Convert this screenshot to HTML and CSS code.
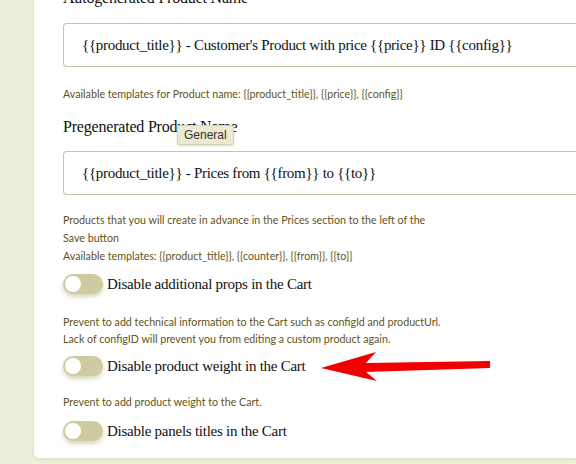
FILE: index.html
```html
<!DOCTYPE html>
<html lang="en">
<head>
  <meta charset="UTF-8" />
  <meta name="viewport" content="width=device-width, initial-scale=1.0"/>
  <title>Product Settings</title>
  <link rel="stylesheet" href="styles.css">
</head>
<body>
  <div class="card">
    <!-- Autogenerated name -->
    <div class="field-label">Autogenerated Product Name</div>
    <div class="text-input">{{product_title}} - Customer's Product with price {{price}} ID {{config}}</div>
    <p class="help help-1">Available templates for Product name: {{product_title}}, {{price}}, {{config}}</p>

    <!-- Pregenerated name -->
    <div class="field-label label-2">Pregenerated Product Name</div>
    <div class="text-input input-2">{{product_title}} - Prices from {{from}} to {{to}}</div>
    <p class="help help-2">Products that you will create in advance in the Prices section to the left of the<br>Save button<br>Available templates: {{product_title}}, {{counter}}, {{from}}, {{to}}</p>

    <!-- Switches -->
    <label class="switch-row row-1"><span class="switch"><span class="knob"></span></span>Disable additional props in the Cart</label>
    <p class="help help-3">Prevent to add technical information to the Cart such as configId and productUrl.<br>Lack of configID will prevent you from editing a custom product again.</p>

    <label class="switch-row row-2"><span class="switch"><span class="knob"></span></span>Disable product weight in the Cart</label>
    <p class="help help-4">Prevent to add product weight to the Cart.</p>

    <label class="switch-row row-3"><span class="switch"><span class="knob"></span></span>Disable panels titles in the Cart</label>
  </div>

  <div class="tooltip">General</div>

  <svg class="arrow" width="576" height="464" viewBox="0 0 576 464">
    <polygon points="321,368 376,352 366,363 490,361 490,368 366,372 377,381" fill="#f20000"/>
  </svg>
</body>
</html>
```

FILE: styles.css
```css
body {
  margin: 0;
  background-color: #eef0db;
  font-family: "Liberation Serif", "Times New Roman", serif;
  color: #111;
  height: 464px;
  overflow: hidden;
  position: relative;
}
.card {
  margin: -30px 0 0 33px;
  padding: 17px 0 17px 29px;
  background-color: #fff;
  border: 1px solid #e3e5cf;
  border-right: none;
  border-radius: 0 0 0 6px;
  box-shadow: 0 1px 2px rgba(120,120,60,0.15);
}
.field-label {
  font-size: 16px;
  letter-spacing: -0.2px;
  line-height: 20px;
  height: 20px;
}
.text-input {
  margin-top: 15px;
  height: 42px;
  line-height: 42px;
  border: 1px solid #c6c79d;
  border-right: none;
  border-radius: 4px 0 0 4px;
  padding-left: 18px;
  font-size: 15px;
  letter-spacing: -0.3px;
  white-space: nowrap;
}
.input-2 {
  margin-top: 14px;
}
.help {
  margin: 0;
  font-family: Lato, "Open Sans", sans-serif;
  font-size: 10.7px;
  line-height: 18px;
  color: #5f5322;
}
.help-1 {
  margin-top: 18px;
}
.label-2 {
  margin-top: 14px;
}
.help-2 {
  margin-top: 16px;
}
.help-3 {
  margin-top: 19px;
  line-height: 17px;
}
.help-4 {
  margin-top: 17px;
}
.switch-row {
  display: flex;
  align-items: center;
  height: 20px;
  font-size: 15px;
  letter-spacing: -0.25px;
}
.row-1 {
  margin-top: 9px;
}
.row-2 {
  margin-top: 9px;
}
.row-3 {
  margin-top: 10px;
}
.switch {
  width: 40px;
  height: 20px;
  border-radius: 10px;
  background-color: #cfcba1;
  margin-right: 4px;
  display: flex;
  align-items: center;
  padding-left: 2px;
  box-sizing: border-box;
  box-shadow: 0 3px 4px rgba(150,140,80,0.35);
}
.knob {
  width: 16px;
  height: 16px;
  border-radius: 50%;
  background-color: #fff;
}
.tooltip {
  position: absolute;
  left: 177px;
  top: 125px;
  padding: 0 6px;
  height: 18px;
  line-height: 18px;
  background-color: #ecebd2;
  border: 1px solid #d6d4b4;
  border-radius: 3px;
  font-family: "Liberation Sans", Arial, sans-serif;
  font-size: 12px;
  color: #333;
  box-shadow: 0 1px 2px rgba(0,0,0,0.15);
}
.arrow {
  position: absolute;
  left: 0;
  top: 0;
  pointer-events: none;
}
```
